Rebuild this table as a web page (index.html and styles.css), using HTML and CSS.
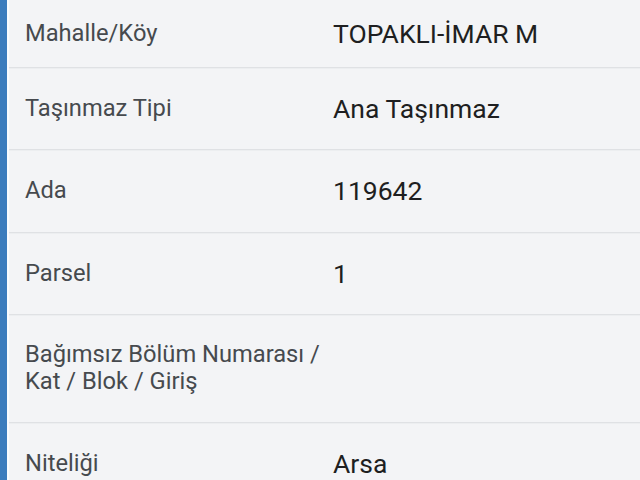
FILE: index.html
```html
<!DOCTYPE html>
<html lang="tr">
<head>
<meta charset="utf-8">
<link rel="stylesheet" href="styles.css">
</head>
<body>
<div class="panel">
  <div class="accent"></div>
  <div class="table">
    <div class="row row-first"><div class="label">Mahalle/Köy</div><div class="value">TOPAKLI-İMAR M</div></div>
    <div class="row"><div class="label">Taşınmaz Tipi</div><div class="value">Ana Taşınmaz</div></div>
    <div class="row row-tall"><div class="label">Ada</div><div class="value">119642</div></div>
    <div class="row"><div class="label">Parsel</div><div class="value">1</div></div>
    <div class="row row-multi"><div class="label">Bağımsız Bölüm Numarası / Kat / Blok / Giriş</div><div class="value"></div></div>
    <div class="row"><div class="label">Niteliği</div><div class="value">Arsa</div></div>
  </div>
</div>
</body>
</html>
```
FILE: styles.css
```css
html, body {
  margin: 0;
  padding: 0;
  background: #f3f4f6;
}
body {
  font-family: Roboto, "Liberation Sans", sans-serif;
}
.panel {
  display: flex;
  height: 480px;
  overflow: hidden;
}
.accent {
  width: 7px;
  flex: none;
  background: #3b7cbd;
  border-right: 2px solid #f9fbfe;
}
.table {
  flex: 1;
  display: flex;
  flex-direction: column;
}
.row {
  flex: none;
  display: grid;
  grid-template-columns: 318px 1fr;
  align-items: center;
  padding: 27px 0;
  border-bottom: 1px solid #dfe1e4;
  box-shadow: 0 1px 0 #eceef0;
}
.row-first {
  padding: 20px 0 20px;
}
.row-tall {
  padding: 27px 0 28px;
}
.row-multi {
  padding: 26px 0 27px;
}
.label {
  padding: 0 0 0 16px;
  font-size: 23.7px;
  line-height: 27px;
  color: #464a4e;
}
.value {
  padding: 0 16px 0 6px;
  font-size: 26.5px;
  line-height: 27px;
  color: #1e1f21;
}
```
